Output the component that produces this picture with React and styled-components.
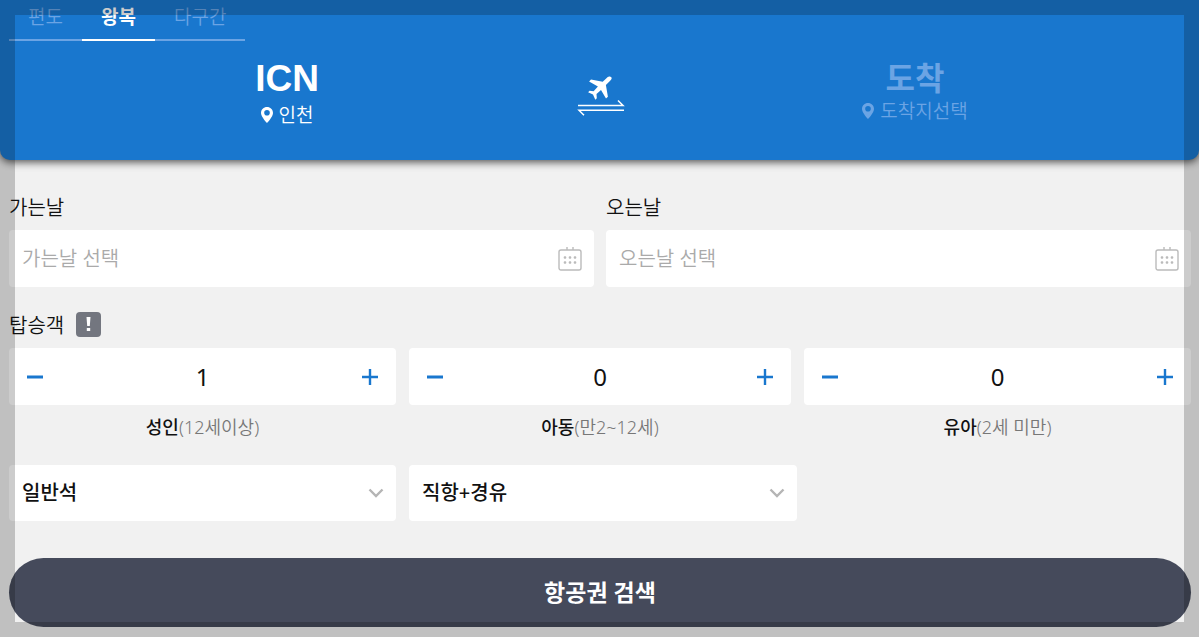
import React, { useState } from "react";
import styled, { createGlobalStyle } from "styled-components";

const passengerTypes = [
  { id: "adult", name: "성인", note: "(12세이상)", start: 1 },
  { id: "child", name: "아동", note: "(만2~12세)", start: 0 },
  { id: "infant", name: "유아", note: "(2세 미만)", start: 0 },
];

const PinIcon = () => (
  <svg width="12" height="16" viewBox="0 0 12 16" aria-hidden="true">
    <path
      fill="currentColor"
      fillRule="evenodd"
      d="M6 0C2.7 0 0 2.6 0 5.9 0 9.7 6 16 6 16s6-6.300 6-10.100C12 2.600 9.300 0 6 0zm0 8.600a2.800 2.800 0 1 1 0-5.600 2.800 2.800 0 0 1 0 5.600z"
    />
  </svg>
);

const PlaneIcon = () => (
  <svg width="48" height="42" viewBox="0 0 48 42" aria-hidden="true">
    <path
      fill="#fff"
      d="M34.300 2.200c-1.300-1.200-3.300-.5-4.600.7l-4 3.900-11.700-2.300-1.900 1.900 8.800 5.100-4.300 4.700-4-.5-1.500 1.500 4.900 2.300 2.300 5.200 1.500-1.500-.3-4.300 4.500-4 5 8.700 1.900-1.900-2-11.800 4-3.900c1.400-1.300 2.400-2.900 1.400-3.800z"
    />
    <path
      fill="none"
      stroke="#fff"
      strokeWidth="1.500"
      d="M1 30.500h45l-5-5M47 35.300H2l5 5"
    />
  </svg>
);

const CalendarIcon = () => (
  <svg width="24" height="24" viewBox="0 0 24 24" aria-hidden="true">
    <rect
      x="1"
      y="3"
      width="22"
      height="20"
      rx="2"
      fill="none"
      stroke="#bbb"
      strokeWidth="1.400"
    />
    <path stroke="#bbb" strokeWidth="1.400" d="M9 0v3M15 0v3" />
    <g fill="#bbb">
      {[7, 12, 17].map((x) =>
        [10.5, 15.5].map((y) => (
          <rect key={`${x}-${y}`} x={x - 1.3} y={y - 1.3} width="2.600" height="2.600" rx="1" />
        ))
      )}
    </g>
  </svg>
);

const ChevronIcon = () => (
  <svg width="16" height="10" viewBox="0 0 16 10" aria-hidden="true">
    <path d="M1.500 1.500L8 8l6.500-6.500" fill="none" stroke="#b5b5b5" strokeWidth="2.400" />
  </svg>
);

const Counter = ({ type }) => {
  const [count, setCount] = useState(type.start);
  return (
    <Column>
      <CounterBox role="group" aria-labelledby={type.id}>
        <StepButton
          type="button"
          aria-label="빼기"
          onClick={() => setCount(Math.max(0, count - 1))}
        >
          <svg width="16" height="16" viewBox="0 0 16 16">
            <path d="M0 8h16" stroke="currentColor" strokeWidth="3" />
          </svg>
        </StepButton>
        <output>{count}</output>
        <StepButton
          type="button"
          aria-label="더하기"
          onClick={() => setCount(count + 1)}
        >
          <svg width="16" height="16" viewBox="0 0 16 16">
            <path d="M0 8h16M8 0v16" stroke="currentColor" strokeWidth="2.400" />
          </svg>
        </StepButton>
      </CounterBox>
      <Caption id={type.id}>
        {type.name}
        <span>{type.note}</span>
      </Caption>
    </Column>
  );
};

const App = () => {
  const [trip, setTrip] = useState("왕복");
  return (
    <>
      <GlobalStyle />
      <Page>
        <Header>
          <Tabs>
            {["편도", "왕복", "다구간"].map((name) => (
              <Tab
                key={name}
                type="button"
                $active={trip === name}
                onClick={() => setTrip(name)}
              >
                {name}
              </Tab>
            ))}
          </Tabs>
          <Route>
            <Airport type="button">
              <Code>ICN</Code>
              <City>
                <PinIcon />
                인천
              </City>
            </Airport>
            <Swap type="button" aria-label="출발지 도착지 변경">
              <PlaneIcon />
            </Swap>
            <Airport type="button" $empty>
              <Code $empty>도착</Code>
              <City>
                <PinIcon />
                도착지선택
              </City>
            </Airport>
          </Route>
        </Header>

        <Form onSubmit={(e) => e.preventDefault()}>
          <Dates>
            <div>
              <Label htmlFor="depart">가는날</Label>
              <Field>
                <input id="depart" type="text" placeholder="가는날 선택" />
                <CalendarIcon />
              </Field>
            </div>
            <div>
              <Label htmlFor="return">오는날</Label>
              <Field>
                <input id="return" type="text" placeholder="오는날 선택" />
                <CalendarIcon />
              </Field>
            </div>
          </Dates>

          <Heading>
            탑승객
            <InfoButton type="button" aria-label="탑승객 안내">
              <svg width="5" height="14" viewBox="0 0 5 14">
                <path fill="#fff" d="M.500 0h4l-.7 9H1.200zM.8 11h3.400v3H.8z" />
              </svg>
            </InfoButton>
          </Heading>
          <Columns>
            {passengerTypes.map((type) => (
              <Counter key={type.id} type={type} />
            ))}
          </Columns>

          <Options>
            <Column>
              <SelectBox>
                <select aria-label="좌석 등급">
                  <option>일반석</option>
                  <option>비즈니스석</option>
                  <option>일등석</option>
                </select>
                <ChevronIcon />
              </SelectBox>
            </Column>
            <Column>
              <SelectBox>
                <select aria-label="경유 여부">
                  <option>직항+경유</option>
                  <option>직항</option>
                </select>
                <ChevronIcon />
              </SelectBox>
            </Column>
          </Options>

          <SearchButton type="submit">항공권 검색</SearchButton>
        </Form>
      </Page>
      <Frame />
    </>
  );
};

export default App;

const GlobalStyle = createGlobalStyle`
  * {
    box-sizing: border-box;
  }
  body {
    margin: 0;
    background: #f1f1f1;
    color: #111;
    font-family: "Noto Sans", "Noto Sans CJK KR", sans-serif;
    font-size: 20px;
    font-weight: 350;
  }
  button, input, select {
    margin: 0;
    padding: 0;
    border: 0;
    background: none;
    color: inherit;
    font: inherit;
  }
  button {
    cursor: pointer;
  }
  svg {
    display: block;
    flex: none;
  }
`;

const Page = styled.div`
  padding-bottom: 10px;
`;

const Header = styled.header`
  height: 160px;
  padding: 0 8px 0 9px;
  border-radius: 0 0 10px 10px;
  background: #1977ce;
  box-shadow: 0 2px 8px rgba(0, 0, 0, 0.7);
  color: #fff;
`;

const Tabs = styled.div`
  display: flex;
`;

const Tab = styled.button`
  height: 41px;
  padding: 0 19px 4px;
  border-bottom: 2px solid ${({ $active }) => ($active ? "#fff" : "#6ba4e4")};
  color: ${({ $active }) => ($active ? "#fff" : "#6ba4e4")};
  font-size: 19px;
  line-height: 35px;
  font-weight: ${({ $active }) => ($active ? 700 : 350)};
`;

const Route = styled.div`
  display: grid;
  grid-template-columns: 1fr 76px 1fr;
  align-items: start;
  padding: 17px 0 0 2px;
`;

const Airport = styled.button`
  display: flex;
  flex-direction: column;
  align-items: center;
  color: ${({ $empty }) => ($empty ? "#6ba4e4" : "#fff")};
`;

const Code = styled.strong`
  font-family: "Liberation Sans", "Noto Sans CJK KR", sans-serif;
  font-size: ${({ $empty }) => ($empty ? 32 : 37)}px;
  line-height: 42px;
  margin-bottom: ${({ $empty }) => ($empty ? -4 : 0)}px;
  font-weight: 700;
`;

const City = styled.span`
  display: flex;
  align-items: center;
  gap: 6px;
  font-size: 19px;
  line-height: 30px;
`;

const Swap = styled.button`
  display: flex;
  justify-content: center;
  padding-top: 17px;
`;

const Form = styled.form`
  padding: 32px 8px 0 9px;
`;

const Dates = styled.div`
  display: grid;
  grid-template-columns: 1fr 1fr;
  gap: 12px;
`;

const Label = styled.label`
  display: block;
  height: 38px;
  line-height: 32px;
`;

const Field = styled.div`
  display: flex;
  align-items: center;
  height: 57px;
  padding: 0 12px 0 13px;
  border-radius: 4px;
  background: #fff;

  input {
    flex: 1;
    min-width: 0;
    outline: none;
  }
  input::placeholder {
    color: #aaa;
  }
`;

const Heading = styled.div`
  display: flex;
  align-items: center;
  gap: 12px;
  height: 61px;
  padding-top: 13px;
`;

const InfoButton = styled.button`
  display: flex;
  align-items: center;
  justify-content: center;
  width: 25px;
  height: 25px;
  border-radius: 4px;
  background: #73767f;
`;

const Columns = styled.div`
  display: grid;
  grid-template-columns: repeat(3, 1fr);
`;

const Column = styled.div`
  padding: 0 6px;

  &:first-child {
    padding: 0 7px 0 0;
  }
  &:last-child {
    padding-right: 0;
  }
  &:nth-child(3) {
    padding-left: 7px;
  }
`;

const CounterBox = styled.div`
  display: flex;
  align-items: center;
  justify-content: space-between;
  height: 57px;
  padding: 0 18px;
  border-radius: 4px;
  background: #fff;

  output {
    font-size: 24px;
    font-weight: 400;
  }
`;

const StepButton = styled.button`
  color: #1977ce;
`;

const Caption = styled.p`
  margin: 0;
  padding-top: 8px;
  font-size: 18px;
  line-height: 28px;
  font-weight: 500;
  text-align: center;

  span {
    color: #777;
    font-weight: 350;
  }
`;

const Options = styled(Columns)`
  padding-top: 24px;
`;

const SelectBox = styled.div`
  display: grid;
  align-items: center;
  height: 56px;
  border-radius: 4px;
  background: #fff;

  select,
  svg {
    grid-area: 1 / 1;
  }
  select {
    width: 100%;
    height: 100%;
    padding: 0 40px 2px 13px;
    appearance: none;
    outline: none;
    font-weight: 500;
  }
  svg {
    justify-self: end;
    margin-right: 12px;
    pointer-events: none;
  }
`;

const SearchButton = styled.button`
  display: block;
  width: 100%;
  height: 69px;
  margin-top: 37px;
  padding-bottom: 4px;
  border-radius: 35px;
  background: #454a5b;
  color: #fff;
  font-size: 23px;
  font-weight: 700;
`;

// shaded edge that stays over the page
const Frame = styled.div`
  position: fixed;
  inset: 0;
  border: 15px solid rgba(0, 0, 0, 0.2);
  pointer-events: none;
`;
